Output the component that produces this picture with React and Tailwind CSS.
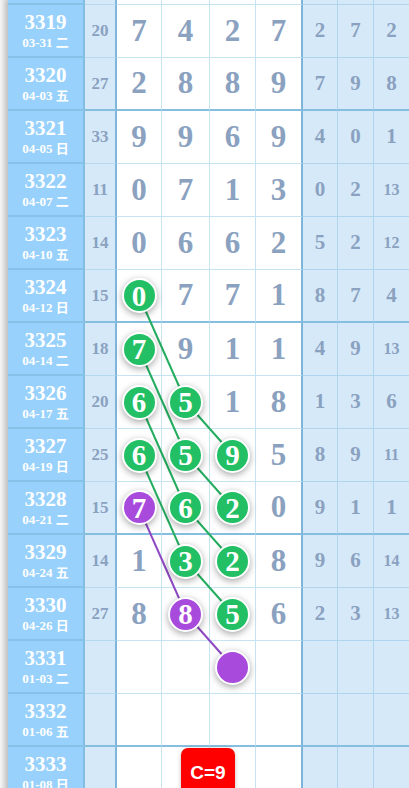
import React from 'react';

const rows = [
  { no: '3319', date: '03-31 二', sum: '20', main: ['7', '4', '2', '7'], tail: ['2', '7', '2'] },
  { no: '3320', date: '04-03 五', sum: '27', main: ['2', '8', '8', '9'], tail: ['7', '9', '8'] },
  { no: '3321', date: '04-05 日', sum: '33', main: ['9', '9', '6', '9'], tail: ['4', '0', '1'] },
  { no: '3322', date: '04-07 二', sum: '11', main: ['0', '7', '1', '3'], tail: ['0', '2', '13'] },
  { no: '3323', date: '04-10 五', sum: '14', main: ['0', '6', '6', '2'], tail: ['5', '2', '12'] },
  { no: '3324', date: '04-12 日', sum: '15', main: ['g0', '7', '7', '1'], tail: ['8', '7', '4'] },
  { no: '3325', date: '04-14 二', sum: '18', main: ['g7', '9', '1', '1'], tail: ['4', '9', '13'] },
  { no: '3326', date: '04-17 五', sum: '20', main: ['g6', 'g5', '1', '8'], tail: ['1', '3', '6'] },
  { no: '3327', date: '04-19 日', sum: '25', main: ['g6', 'g5', 'g9', '5'], tail: ['8', '9', '11'] },
  { no: '3328', date: '04-21 二', sum: '15', main: ['p7', 'g6', 'g2', '0'], tail: ['9', '1', '1'] },
  { no: '3329', date: '04-24 五', sum: '14', main: ['1', 'g3', 'g2', '8'], tail: ['9', '6', '14'] },
  { no: '3330', date: '04-26 日', sum: '27', main: ['8', 'p8', 'g5', '6'], tail: ['2', '3', '13'] },
  { no: '3331', date: '01-03 二', sum: '', main: ['', '', 'p', ''], tail: ['', '', ''] },
  { no: '3332', date: '01-06 五', sum: '', main: ['', '', '', ''], tail: ['', '', ''] },
  { no: '3333', date: '01-08 日', sum: '', main: ['', '', '', ''], tail: ['', '', ''], badge: true },
];

const mainW = ['w-[45px]', 'w-[48px]', 'w-[46px]', 'w-[47px]'];
const tailW = ['w-[35px]', 'w-[36px]', 'w-[35px]'];

const greenLines = [
  [139, 296, 186, 402],
  [139, 349, 186, 455],
  [186, 402, 233, 455],
  [139, 402, 186, 508],
  [186, 455, 233, 508],
  [139, 455, 186, 561],
  [186, 508, 233, 561],
  [186, 561, 233, 614],
];
const purpleLines = [
  [139, 508, 186, 614],
  [186, 614, 233, 667],
];

const serif = { fontFamily: '"Liberation Serif", "Noto Sans CJK SC", serif' };

const Ball = ({ v }) => {
  const purple = v[0] === 'p';
  return (
    <div
      className={`relative z-20 w-[35px] h-[35px] rounded-full border-2 border-white flex items-center justify-center text-white text-[29px] font-bold leading-none shadow-[0_2px_7px_rgba(0,0,0,0.35)] ${purple ? 'bg-[#a84bdc]' : 'bg-[#22bf65]'}`}
    >
      <span className="pt-[1px]">{v.slice(1)}</span>
    </div>
  );
};

const Row = ({ r, i }) => {
  const thick = i % 4 === 1;
  const b = thick ? 'border-b-2' : 'border-b';
  return (
    <div className="relative flex h-[53px]">
      <div className="w-[77px] h-full bg-[#98d1fc] border-r-2 border-r-[#84bde2] border-b-2 border-b-[#86c1e8] flex flex-col items-center justify-center text-white font-bold leading-none">
        <span className="text-[21px]">{r.no}</span>
        <span className="text-[13px] mt-[3px]">{r.date}</span>
      </div>
      <div className={`w-[32px] h-full bg-[#d6e9f9] border-r-2 border-r-[#7db6da] ${b} ${thick ? 'border-b-[#86bee0]' : 'border-b-[#b6d9ee]'} flex items-center justify-center text-[17px] font-bold text-[#8aa1c0]`}>
        {r.sum}
      </div>
      {r.main.map((v, j) => (
        <div
          key={j}
          className={`${mainW[j]} h-full bg-white ${j === 3 ? 'border-r-2 border-r-[#7db6da]' : 'border-r border-r-[#c6e3f2]'} ${b} ${thick ? 'border-b-[#86bee0]' : 'border-b-[#c6e3f2]'} flex items-center justify-center text-[31px] font-bold text-[#8aa1c0]`}
        >
          {v && (v[0] === 'g' || v[0] === 'p') ? <Ball v={v} /> : v}
        </div>
      ))}
      {r.tail.map((v, j) => (
        <div
          key={j}
          className={`${tailW[j]} h-full bg-[#d6e9f9] ${j < 2 ? 'border-r border-r-[#aed5ed]' : ''} ${b} ${thick ? 'border-b-[#86bee0]' : 'border-b-[#aed5ed]'} flex items-center justify-center font-bold text-[#8aa1c0] ${v.length > 1 ? 'text-[16px]' : 'text-[21px]'}`}
        >
          {v}
        </div>
      ))}
      {r.badge && (
        <div
          className="absolute left-[173px] top-[1px] z-30 w-[54px] h-[50px] rounded-[7px] bg-[#ff0000] text-white text-[19px] font-bold flex items-start justify-center pt-[11px] shadow-[0_1px_4px_rgba(0,0,0,0.25)]"
          style={{ fontFamily: '"Liberation Sans", Arial, sans-serif' }}
        >
          C=9
        </div>
      )}
    </div>
  );
};

export default function App() {
  return (
    <div className="relative w-[409px] h-[788px] overflow-hidden bg-[#f4f4f4]" style={serif}>
      <div className="absolute left-0 top-0 w-[8px] h-full bg-gradient-to-r from-[#f6f6f6] to-[#d9d9d9]" />
      <div className="relative ml-[8px] shadow-[-3px_0_5px_rgba(0,0,0,0.12)]">
        <div className="flex h-[5px]">
          <div className="w-[77px] h-full bg-[#98d1fc] border-r-2 border-r-[#84bde2] border-b-2 border-b-[#86c1e8]" />
          <div className="w-[32px] h-full bg-[#d6e9f9] border-r-2 border-r-[#7db6da] border-b border-b-[#b6d9ee]" />
          {mainW.map((w, j) => (
            <div key={j} className={`${w} h-full bg-white ${j === 3 ? 'border-r-2 border-r-[#7db6da]' : 'border-r border-r-[#c6e3f2]'} border-b border-b-[#c6e3f2]`} />
          ))}
          {tailW.map((w, j) => (
            <div key={j} className={`${w} h-full bg-[#d6e9f9] ${j < 2 ? 'border-r border-r-[#aed5ed]' : ''} border-b border-b-[#aed5ed]`} />
          ))}
        </div>
        {rows.map((r, i) => (
          <Row key={r.no} r={r} i={i} />
        ))}
      </div>
      <svg className="absolute left-0 top-0 z-10 pointer-events-none" width="409" height="788">
        {greenLines.map(([x1, y1, x2, y2], k) => (
          <line key={k} x1={x1} y1={y1} x2={x2} y2={y2} stroke="#23ad5f" strokeWidth="2" />
        ))}
        {purpleLines.map(([x1, y1, x2, y2], k) => (
          <line key={k} x1={x1} y1={y1} x2={x2} y2={y2} stroke="#8e48c4" strokeWidth="2" />
        ))}
      </svg>
    </div>
  );
}
